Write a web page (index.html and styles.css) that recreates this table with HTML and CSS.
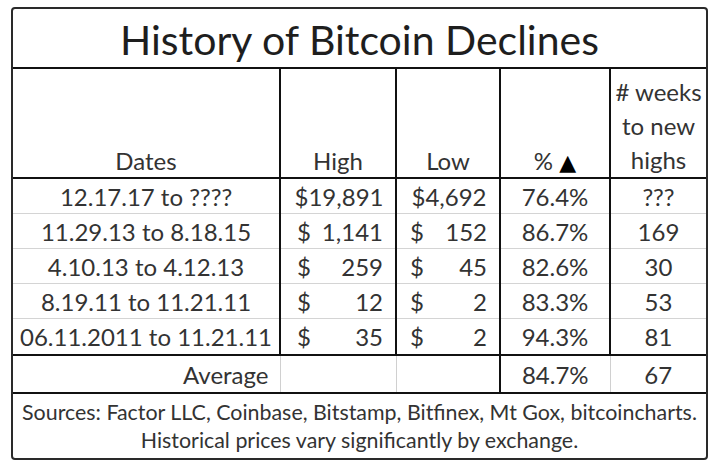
FILE: index.html
```html
<!DOCTYPE html>
<html>
<head>
<meta charset="utf-8">
<link rel="stylesheet" href="styles.css">
</head>
<body>
<div class="frame">
<table class="tbl">
  <colgroup>
    <col class="c-dates"><col class="c-high"><col class="c-low"><col class="c-pct"><col class="c-weeks">
  </colgroup>
  <tr class="r-title"><td colspan="5" class="title">History of Bitcoin Declines</td></tr>
  <tr class="r-head">
    <td>Dates</td>
    <td>High</td>
    <td>Low</td>
    <td>% <span class="tri">▲</span></td>
    <td class="weeks"># weeks<br>to new<br>highs</td>
  </tr>
  <tr class="r-data first">
    <td>12.17.17 to ????</td>
    <td class="money full high"><span>$19,891</span></td>
    <td class="money full low"><span>$4,692</span></td>
    <td>76.4%</td>
    <td>???</td>
  </tr>
  <tr class="r-data">
    <td>11.29.13 to 8.18.15</td>
    <td class="money high"><span>$</span><span>1,141</span></td>
    <td class="money low"><span>$</span><span>152</span></td>
    <td>86.7%</td>
    <td>169</td>
  </tr>
  <tr class="r-data">
    <td>4.10.13 to 4.12.13</td>
    <td class="money high"><span>$</span><span>259</span></td>
    <td class="money low"><span>$</span><span>45</span></td>
    <td>82.6%</td>
    <td>30</td>
  </tr>
  <tr class="r-data">
    <td>8.19.11 to 11.21.11</td>
    <td class="money high"><span>$</span><span>12</span></td>
    <td class="money low"><span>$</span><span>2</span></td>
    <td>83.3%</td>
    <td>53</td>
  </tr>
  <tr class="r-data last">
    <td>06.11.2011 to 11.21.11</td>
    <td class="money high"><span>$</span><span>35</span></td>
    <td class="money low"><span>$</span><span>2</span></td>
    <td>94.3%</td>
    <td>81</td>
  </tr>
  <tr class="r-avg">
    <td class="avg-label">Average</td>
    <td class="soft-left"></td>
    <td class="soft-left"></td>
    <td class="pct-avg">84.7%</td>
    <td class="soft-left">67</td>
  </tr>
  <tr class="r-src">
    <td colspan="5">Sources: Factor LLC, Coinbase, Bitstamp, Bitfinex, Mt Gox, bitcoincharts.<br>Historical prices vary significantly by exchange.</td>
  </tr>
</table>
</div>
</body>
</html>
```
FILE: styles.css
```css
html, body {
  margin: 0;
  padding: 0;
  background: #ffffff;
}
body {
  font-family: "Lato", "Liberation Sans", sans-serif;
  color: #333333;
}
.frame {
  margin: 7px 0 0 11px;
  width: 697px;
  border: 2px solid #2a2a2a;
  border-radius: 4px;
  overflow: hidden;
  box-sizing: border-box;
}
.tbl {
  width: 100%;
  border-collapse: collapse;
  table-layout: fixed;
}
.c-dates { width: 267px; }
.c-high { width: 116px; }
.c-low { width: 104px; }
.c-pct { width: 110px; }
.c-weeks { width: 96px; }
.tbl td {
  padding: 0;
  text-align: center;
  border-left: 2px solid #111;
  font-size: 24px;
  white-space: nowrap;
}
.tbl td:first-child { border-left: none; }
.r-title td {
  height: 56px;
  font-size: 41px;
  color: #1e1e1e;
  border-bottom: 2px solid #111;
  padding-top: 2px;
}
.r-head td {
  height: 106px;
  vertical-align: bottom;
  border-bottom: 2px solid #111;
  padding-bottom: 2px;
}
.r-head .weeks {
  line-height: 34px;
  padding-bottom: 0;
}
.tri {
  color: #000;
  font-family: "DejaVu Sans", sans-serif;
  font-size: 22px;
}
.r-data td {
  height: 34px;
  border-bottom: 1px solid #d4d4d4;
}
.r-data.last td {
  height: 35px;
  border-bottom: 2px solid #111;
}
.money span {
  display: inline-block;
}
.tbl td.money.high {
  padding: 0 12px 0 16px;
}
.tbl td.money.low {
  padding: 0 12px 0 13px;
}
.money span:first-child {
  float: left;
}
.money span:last-child {
  float: right;
}
.money.full span:first-child {
  float: none;
}
.money.full {
  text-align: center;
}
.tbl td.money.full {
  padding: 0 8px 0 10px;
}
.r-avg td {
  height: 36px;
  border-bottom: 2px solid #111;
}
.r-avg .avg-label {
  text-align: right;
  padding-right: 11px;
}
.r-avg td.soft-left {
  border-left: 1px solid #d0d0d0;
}
.r-avg td.pct-avg {
  border-left: 2px solid #111;
}
.r-src td {
  height: 64px;
  font-size: 21.4px;
  line-height: 28px;
  color: #333;
}
```
